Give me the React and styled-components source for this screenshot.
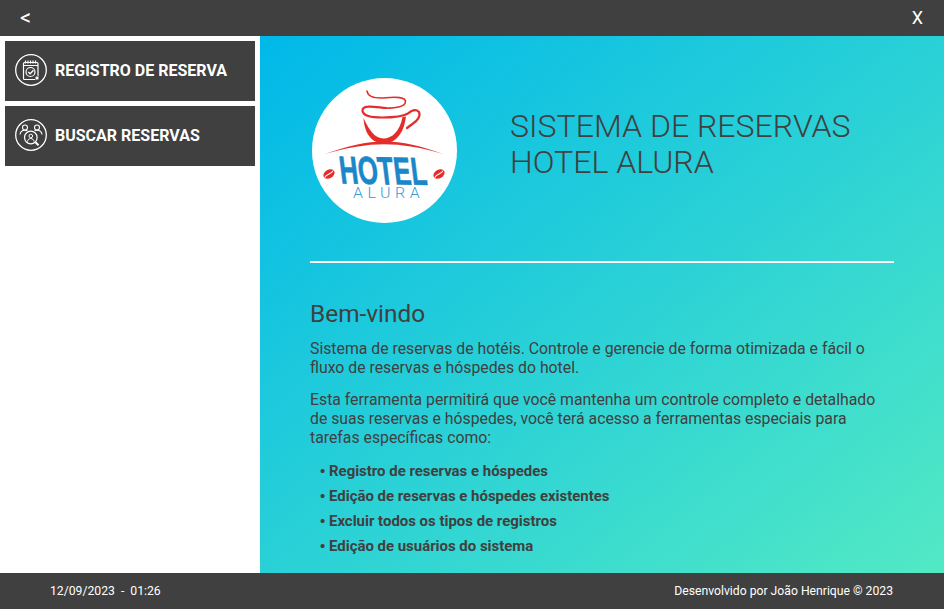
import React from "react";
import styled, { createGlobalStyle } from "styled-components";

const GlobalStyle = createGlobalStyle`
  html, body, #root {
    margin: 0;
    padding: 0;
    height: 100%;
  }
  body {
    font-family: Roboto, "Liberation Sans", sans-serif;
    background: #fff;
    overflow: hidden;
  }
`;

function RegisterIcon() {
  return (
    <IconSvg viewBox="0 0 32 32">
      <circle cx="16" cy="16" r="15.3" strokeWidth="1.3" />
      <rect x="8.5" y="8.5" width="14.5" height="17" rx="1" strokeWidth="1.2" />
      <path d="M10.5 6.5v3M13 6.5v3M15.5 6.5v3M18 6.5v3M20.5 6.5v3" strokeWidth="1.2" />
      <path d="M8.5 11.5h14.5" strokeWidth="1" />
      <circle cx="15.5" cy="18" r="4.5" strokeWidth="1.2" />
      <path d="M13.3 18l1.8 1.8 3.4-3.6" strokeWidth="1.4" />
      <circle cx="22" cy="24" r="2" fill="#fff" stroke="#404040" strokeWidth="0.8" />
    </IconSvg>
  );
}

function SearchIcon() {
  return (
    <IconSvg viewBox="0 0 32 32">
      <circle cx="16" cy="16" r="15.3" strokeWidth="1.3" />
      <circle cx="10" cy="8.5" r="2.5" strokeWidth="1.1" />
      <circle cx="22" cy="8.5" r="2.5" strokeWidth="1.1" />
      <path d="M5 15.5c.3-3 2.4-4.3 5-4.3 1 0 1.8.2 2.5.6M27 15.5c-.3-3-2.4-4.3-5-4.3-1 0-1.8.2-2.5.6" strokeWidth="1.1" />
      <circle cx="15.8" cy="18.5" r="6.3" strokeWidth="1.2" />
      <circle cx="15.8" cy="17" r="1.8" strokeWidth="1" />
      <path d="M12.5 22.5c.3-2 1.7-3 3.3-3s3 1 3.3 3" strokeWidth="1" />
      <path d="M20.5 23.2l3 3" strokeWidth="2" />
    </IconSvg>
  );
}

function Bean({ x, y }) {
  return (
    <g transform={`translate(${x} ${y}) rotate(-30)`}>
      <ellipse rx="6" ry="4.2" fill="#e42d2b" />
      <path d="M-5.5 1C-2 -1.6 2 1.6 5.5 -1" fill="none" stroke="#fff" strokeWidth="1" />
    </g>
  );
}

function HotelLogo() {
  return (
    <LogoSvg viewBox="0 0 145 145">
      <circle cx="72.5" cy="72.5" r="72.5" fill="#fff" />
      <g fill="none" stroke="#e42d2b" strokeLinecap="round">
        <path d="M55 13C56 20 66 20.5 74 19.8C84 18.8 94 19 93.5 24C93 29 82 30.5 74 30" strokeWidth="1.6" />
        <path d="M74 30C66 29.5 51 26 50.5 32C50 38 60 39.5 70 39.5C80 39.5 90 39 96 35.5C100 32 104 31 107 34C109 38 105 43 101 45.5L95 50" strokeWidth="2.2" />
      </g>
      <path d="M51.5 40C52.5 58 62 65.5 71.5 65.5C82 65.5 91.5 58 94 38.5L90.5 39C88 53 80 60.5 71.5 60.5C63 60.5 57 52 51.5 40z" fill="#e42d2b" />
      <path d="M13 76C35 68 55 63.5 72 63.5C90 63.5 110 68 131 76C110 69.5 90 66.2 72 66.2C55 66.2 35 69.5 13 76z" fill="#e42d2b" />
      <Bean x="17" y="96" />
      <Bean x="127" y="96" />
      <LogoWord transform="translate(29 105.5) rotate(1) skewX(8) scale(0.66 1)">HOTEL</LogoWord>
      <LogoSub transform="translate(41 120) scale(1.14 1)">ALURA</LogoSub>
    </LogoSvg>
  );
}

export default function App() {
  return (
    <Page>
      <GlobalStyle />
      <TopBar>
        <BackButton>&lt;</BackButton>
        <CloseButton>X</CloseButton>
      </TopBar>
      <Body>
        <Sidebar>
          <MenuItem>
            <RegisterIcon />
            REGISTRO DE RESERVA
          </MenuItem>
          <MenuItem>
            <SearchIcon />
            BUSCAR RESERVAS
          </MenuItem>
        </Sidebar>
        <Main>
          <Hero>
            <HotelLogo />
            <Title>
              SISTEMA DE RESERVAS
              <br />
              HOTEL ALURA
            </Title>
          </Hero>
          <Divider />
          <Welcome>Bem-vindo</Welcome>
          <Text>
            Sistema de reservas de hotéis. Controle e gerencie de forma otimizada e fácil o fluxo de reservas e
            hóspedes do hotel.
          </Text>
          <Text>
            Esta ferramenta permitirá que você mantenha um controle completo e detalhado de suas reservas e
            hóspedes, você terá acesso a ferramentas especiais para tarefas específicas como:
          </Text>
          <Features>
            <li>Registro de reservas e hóspedes</li>
            <li>Edição de reservas e hóspedes existentes</li>
            <li>Excluir todos os tipos de registros</li>
            <li>Edição de usuários do sistema</li>
          </Features>
        </Main>
      </Body>
      <Footer>
        <span>12/09/2023 &nbsp;-&nbsp; 01:26</span>
        <span>Desenvolvido por João Henrique © 2023</span>
      </Footer>
    </Page>
  );
}

const Page = styled.div`
  width: 944px;
  height: 609px;
  display: flex;
  flex-direction: column;
`;

const TopBar = styled.div`
  height: 36px;
  flex: none;
  background: #404040;
  display: flex;
  align-items: center;
  justify-content: space-between;
  padding: 0 21px 0 20px;
  color: #fff;
`;

const BackButton = styled.span`
  font-size: 22px;
  font-weight: 400;
  line-height: 38px;
`;

const CloseButton = styled.span`
  font-size: 18px;
  line-height: 36px;
`;

const Body = styled.div`
  flex: 1;
  display: flex;
  min-height: 0;
`;

const Sidebar = styled.div`
  width: 260px;
  flex: none;
  box-sizing: border-box;
  padding: 5px;
  display: flex;
  flex-direction: column;
  gap: 5px;
  background: #fff;
`;

const MenuItem = styled.div`
  height: 60px;
  box-sizing: border-box;
  padding: 0 0 2px 10px;
  background: #404040;
  color: #fff;
  display: flex;
  align-items: center;
  gap: 8px;
  font-size: 16px;
  font-weight: 700;
`;

const IconSvg = styled.svg`
  width: 32px;
  height: 32px;
  flex: none;
  fill: none;
  stroke: #fff;
`;

const Main = styled.div`
  flex: 1;
  box-sizing: border-box;
  padding: 42px 50px 0;
  background: linear-gradient(to bottom right, #00b8e9 0%, #52e9c4 100%);
  color: #404040;
`;

const Hero = styled.div`
  display: flex;
  align-items: center;
  gap: 53px;
  padding-left: 2px;
`;

const LogoSvg = styled.svg`
  width: 145px;
  height: 145px;
  flex: none;
`;

const LogoWord = styled.text`
  font-family: "Liberation Sans", sans-serif;
  font-size: 39px;
  font-weight: 700;
  fill: #1a87c9;
  stroke: #1a87c9;
  stroke-width: 0.6;
`;

const LogoSub = styled.text`
  font-family: Roboto, sans-serif;
  font-size: 14px;
  font-weight: 300;
  letter-spacing: 4px;
  fill: #3a9bd5;
`;

const Title = styled.h1`
  margin: 0 0 14px;
  font-size: 32.1px;
  line-height: 36px;
  font-weight: 300;
`;

const Divider = styled.div`
  height: 2px;
  background: #fff;
  margin-top: 38px;
`;

const Welcome = styled.h2`
  margin: 37px 0 10.5px;
  font-size: 24.4px;
  line-height: 28px;
  font-weight: 400;
`;

const Text = styled.p`
  margin: 0;
  font-size: 15.8px;
  line-height: 19.25px;

  & + & {
    margin-top: 12.5px;
  }
`;

const Features = styled.ul`
  margin: 11.5px 0 0;
  padding: 0 0 0 19px;
  list-style: none;
  font-size: 14.95px;
  font-weight: 700;
  line-height: 25px;

  li {
    position: relative;
  }

  li::before {
    content: "•";
    position: absolute;
    left: -9.5px;
    font-size: 17px;
  }
`;

const Footer = styled.div`
  height: 36px;
  flex: none;
  background: #404040;
  color: #fff;
  display: flex;
  align-items: center;
  justify-content: space-between;
  padding: 0 51px 0 50px;
  font-size: 12.2px;
`;
